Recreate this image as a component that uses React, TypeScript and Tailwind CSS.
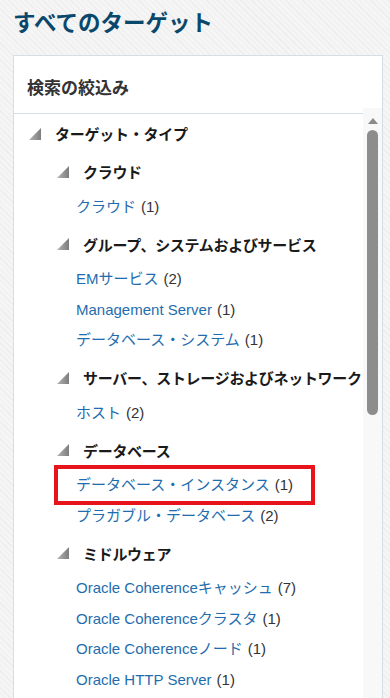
import React from "react";

type Leaf = { name: string; count: number; marked?: boolean };
type Group = { title: string; items: Leaf[] };

const GROUPS: Group[] = [
  { title: "クラウド", items: [{ name: "クラウド", count: 1 }] },
  {
    title: "グループ、システムおよびサービス",
    items: [
      { name: "EMサービス", count: 2 },
      { name: "Management Server", count: 1 },
      { name: "データベース・システム", count: 1 },
    ],
  },
  { title: "サーバー、ストレージおよびネットワーク", items: [{ name: "ホスト", count: 2 }] },
  {
    title: "データベース",
    items: [
      { name: "データベース・インスタンス", count: 1, marked: true },
      { name: "プラガブル・データベース", count: 2 },
    ],
  },
  {
    title: "ミドルウェア",
    items: [
      { name: "Oracle Coherenceキャッシュ", count: 7 },
      { name: "Oracle Coherenceクラスタ", count: 1 },
      { name: "Oracle Coherenceノード", count: 1 },
      { name: "Oracle HTTP Server", count: 1 },
    ],
  },
];

function Expanded() {
  return (
    <svg width="12" height="12" viewBox="0 0 12 12" className="shrink-0 -translate-y-[1px]">
      <defs>
        <linearGradient id="tri" x1="0" y1="0" x2="1" y2="0">
          <stop offset="0" stopColor="#b4b4b4" />
          <stop offset="1" stopColor="#7d7d7d" />
        </linearGradient>
      </defs>
      <polygon points="12,0 12,12 0,12" fill="url(#tri)" />
    </svg>
  );
}

export default function App() {
  return (
    <div
      className="flex h-[698px] flex-col overflow-hidden bg-[repeating-linear-gradient(45deg,#f5f5f5_0px,#f5f5f5_3px,#ededed_3px,#ededed_4px)]"
      style={{ fontFamily: '"Liberation Sans", "Noto Sans CJK JP", sans-serif' }}
    >
      <h1 className="pl-[13px] pt-[10px] text-[22.5px] font-bold leading-[28px] text-[#0a486b]">
        すべてのターゲット
      </h1>

      <div className="ml-[13px] mt-[17px] flex min-h-0 w-[370px] flex-1 border border-b-0 border-[#d5dde6] bg-white">
        <div className="min-w-0 flex-1 overflow-hidden">
          <div className="flex h-[58px] items-center border-b border-[#d5dde6] pl-[13px] pt-[8px]">
            <h2 className="text-[17px] font-bold leading-none text-[#333333]">検索の絞込み</h2>
          </div>

          {/* ツリー */}
          <div className="flex h-[35px] items-center whitespace-nowrap pl-[15px] pt-[6px]">
            <Expanded />
            <span className="ml-[14px] text-[15px] font-bold leading-none tracking-[-0.25px] text-[#1a1a1a]">ターゲット・タイプ</span>
          </div>

          {GROUPS.map((g) => (
            <div key={g.title}>
              <div className="flex h-[42px] items-center whitespace-nowrap pl-[43px] pt-[5px]">
                <Expanded />
                <span className="ml-[14px] text-[15px] font-bold leading-none tracking-[-0.3px] text-[#1a1a1a]">{g.title}</span>
              </div>
              {g.items.map((it) => (
                <div key={it.name} className="relative flex h-[30.5px] items-center whitespace-nowrap pl-[62px] text-[15px] leading-none">
                  <span className="text-[#1f6dae]">{it.name}</span>
                  <span className="ml-[5px] text-[#333333]">({it.count})</span>
                  {it.marked && (
                    <div className="absolute left-[40px] top-[-5px] h-[40px] w-[261px] border-[4px] border-[#e8141c]" />
                  )}
                </div>
              ))}
            </div>
          ))}
        </div>

        {/* スクロールバー */}
        <div className="mt-[52px] flex w-[19px] shrink-0 flex-col items-center bg-[#f8f8f8] pt-[10px]">
          <svg width="10" height="6" viewBox="0 0 10 6">
            <polygon points="5,0 10,6 0,6" fill="#8a8a8a" />
          </svg>
          <div className="mt-[6px] h-[285px] w-[11px] rounded-[6px] bg-[#8d8d8d]" />
        </div>
      </div>
    </div>
  );
}
